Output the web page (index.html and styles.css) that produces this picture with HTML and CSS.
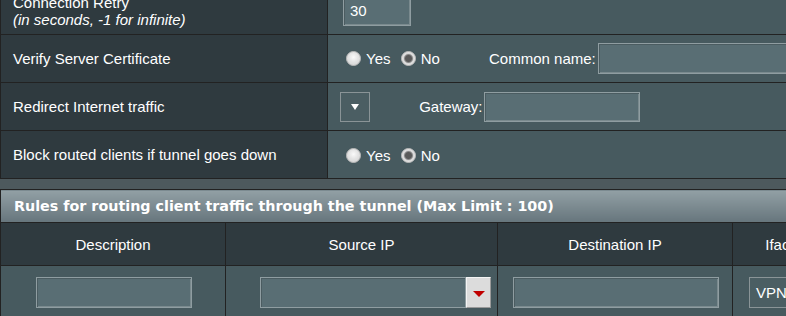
FILE: index.html
```html
<!DOCTYPE html>
<html>
<head>
<meta charset="utf-8">
<link rel="stylesheet" href="styles.css">
</head>
<body>
<div class="page">
  <table class="form">
    <tr>
      <th>Connection Retry<br><i>(in seconds, -1 for infinite)</i></th>
      <td><input class="txt num" value="30"></td>
    </tr>
    <tr>
      <th>Verify Server Certificate</th>
      <td>
        <label class="opt"><input type="radio" class="radio" name="v">Yes</label>
        <label class="opt"><input type="radio" class="radio" name="v" checked>No</label>
        <span class="lbl cn">Common name:</span><input class="txt cname">
      </td>
    </tr>
    <tr>
      <th>Redirect Internet traffic</th>
      <td>
        <span class="mini"><span class="tri-w"></span></span>
        <span class="lbl gw">Gateway:</span><input class="txt gate">
      </td>
    </tr>
    <tr>
      <th>Block routed clients if tunnel goes down</th>
      <td>
        <label class="opt"><input type="radio" class="radio" name="b">Yes</label>
        <label class="opt"><input type="radio" class="radio" name="b" checked>No</label>
      </td>
    </tr>
  </table>

  <table class="rules">
    <colgroup>
      <col class="c1"><col class="c2"><col class="c3"><col class="c4">
    </colgroup>
    <thead>
      <tr><td colspan="4" class="bar">Rules for routing client traffic through the tunnel (Max Limit : 100)</td></tr>
    </thead>
    <tbody>
      <tr class="heads">
        <th>Description</th>
        <th>Source IP</th>
        <th>Destination IP</th>
        <th>Iface</th>
      </tr>
      <tr class="entry">
        <td><input class="txt desc"></td>
        <td><span class="combo"><span class="field"></span><span class="btn"><span class="tri-r"></span></span></span></td>
        <td><input class="txt dest"></td>
        <td class="ifc"><span class="sel">VPN</span></td>
      </tr>
    </tbody>
  </table>
</div>
</body>
</html>
```

FILE: styles.css
```css
html, body {
  margin: 0;
  padding: 0;
}
body {
  overflow: hidden;
  background: #4d595d;
  font-family: "Liberation Sans", Arial, sans-serif;
  font-size: 15px;
  color: #ffffff;
}
.page {
  margin-top: -14px;
  width: 830px;
}
table {
  border-collapse: collapse;
  width: 830px;
}

/* form table */
.form th {
  width: 314px;
  height: 47px;
  padding: 0 0 0 12px;
  background: #2f3a3f;
  border: 1px solid #222;
  text-align: left;
  font-weight: normal;
  line-height: 17px;
}
.form td {
  height: 47px;
  padding: 0 0 0 10px;
  background: #475a5f;
  border: 1px solid #222;
  white-space: nowrap;
}

.txt {
  box-sizing: border-box;
  height: 31px;
  margin: 0;
  padding: 0 6px;
  background: #596e74;
  border: 1px solid #8f9da1;
  box-shadow: inset 1px 1px 0 #4b5c61, inset -1px -1px 0 #7a8a8e;
  color: #fff;
  font-family: "Liberation Sans", Arial, sans-serif;
  font-size: 15px;
  vertical-align: middle;
  outline: none;
}
.num {
  width: 68px;
  margin-left: 5px;
}
.cname {
  width: 200px;
  margin-left: 2px;
}
.gate {
  width: 156px;
  height: 30px;
  margin-left: 1px;
}

.opt {
  display: inline-flex;
  align-items: center;
  vertical-align: middle;
}
.radio {
  appearance: none;
  -webkit-appearance: none;
  box-sizing: border-box;
  width: 15px;
  height: 15px;
  margin: 0 5px 0 8px;
  border-radius: 50%;
  border: 1px solid #b9b9b9;
  background: radial-gradient(circle at 50% 40%, #fafafa 0, #e4e4e4 45%, #cfcfcf 100%);
}
.radio:checked {
  background: radial-gradient(circle, #5a5a5a 0 3px, #8a8a8a 4px, #d6d6d6 5px, #ececec 7px);
}
.opt + .opt .radio {
  margin-left: 6px;
}
.lbl {
  vertical-align: middle;
}
.cn {
  margin-left: 45px;
}
.gw {
  margin-left: 45px;
}

.mini {
  display: inline-flex;
  align-items: center;
  justify-content: center;
  box-sizing: border-box;
  width: 30px;
  height: 30px;
  margin-left: 2px;
  border: 1px solid #8a9497;
  background: #4b5e63;
  vertical-align: middle;
}
.tri-w {
  width: 0;
  height: 0;
  border-left: 4px solid transparent;
  border-right: 4px solid transparent;
  border-top: 6px solid #ffffff;
}

/* rules table */
.rules {
  margin-top: 10px;
  table-layout: fixed;
}
.c1 { width: 225px; }
.c2 { width: 272px; }
.c3 { width: 235px; }
.c4 { width: 98px; }

.bar {
  height: 32px;
  padding: 0 0 0 13px;
  border: 1px solid #222;
  background: linear-gradient(#92a0a5 0%, #66757c 100%);
  font-family: "DejaVu Sans", Verdana, sans-serif;
  font-weight: bold;
  font-size: 14.3px;
  white-space: nowrap;
  color: #fff;
}
.heads th {
  height: 42px;
  padding: 0;
  background: #2f3a3f;
  border: 1px solid #222;
  font-weight: normal;
  text-align: center;
}
.entry td {
  height: 50px;
  padding: 11px 0 0 0;
  vertical-align: top;
  background: #475a5f;
  border: 1px solid #222;
  text-align: center;
  white-space: nowrap;
}
.desc {
  width: 156px;
  margin-left: 2px;
}
.dest {
  width: 206px;
  margin-left: 2px;
}
.combo {
  display: inline-flex;
  margin-left: 28px;
  vertical-align: top;
}
.field {
  box-sizing: border-box;
  width: 206px;
  height: 31px;
  background: #596e74;
  border: 1px solid #8f9da1;
  box-shadow: inset 1px 1px 0 #4b5c61;
}
.btn {
  box-sizing: border-box;
  width: 25px;
  height: 31px;
  display: inline-flex;
  align-items: center;
  justify-content: center;
  background: #dcdcdc;
  border: 1px solid;
  border-color: #f4f4f4 #9a9a9a #9a9a9a #f4f4f4;
}
.tri-r {
  width: 0;
  height: 0;
  margin-top: 2px;
  border-left: 6px solid transparent;
  border-right: 6px solid transparent;
  border-top: 6px solid #c00000;
}
.ifc {
  text-align: left !important;
}
.sel {
  display: inline-flex;
  align-items: center;
  box-sizing: border-box;
  height: 31px;
  width: 70px;
  margin-left: 16px;
  padding-left: 6px;
  border: 1px solid #8a9497;
  background: #4b5e63;
  font-size: 15px;
}
```
